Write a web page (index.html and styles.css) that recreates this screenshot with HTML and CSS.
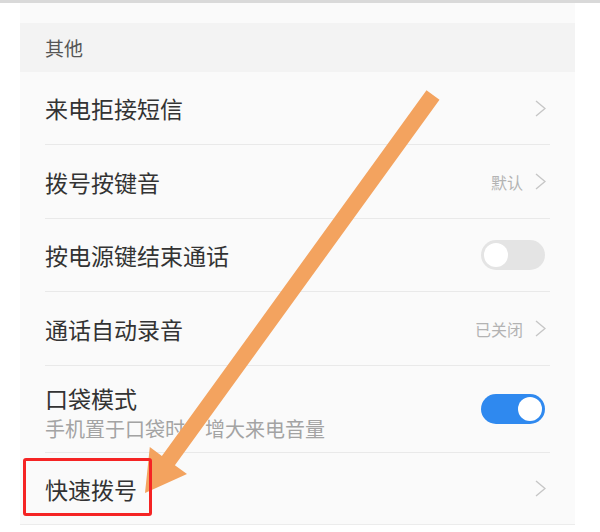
FILE: index.html
```html
<!DOCTYPE html>
<html lang="zh">
<head>
<meta charset="utf-8">
<link rel="stylesheet" href="styles.css">
</head>
<body>
<div class="topline"></div>
<div class="card">
  <div class="section-head">其他</div>
  <div class="row r1"><span class="title">来电拒接短信</span><span class="right"><svg class="chev" viewBox="0 0 11 17"><polyline points="1,1 10,8.5 1,16"/></svg></span></div>
  <div class="row r2"><span class="title">拨号按键音</span><span class="right"><span class="value">默认</span><svg class="chev" viewBox="0 0 11 17"><polyline points="1,1 10,8.5 1,16"/></svg></span></div>
  <div class="row r3"><span class="title">按电源键结束通话</span><span class="right"><span class="toggle off"><span class="knob"></span></span></span></div>
  <div class="row r4"><span class="title">通话自动录音</span><span class="right"><span class="value">已关闭</span><svg class="chev" viewBox="0 0 11 17"><polyline points="1,1 10,8.5 1,16"/></svg></span></div>
  <div class="row r5"><div class="texts"><span class="title t5">口袋模式</span><span class="sub">手机置于口袋时，增大来电音量</span></div><span class="right"><span class="toggle on"><span class="knob"></span></span></span></div>
  <div class="row r6"><span class="title">快速拨号</span><span class="right"><svg class="chev" viewBox="0 0 11 17"><polyline points="1,1 10,8.5 1,16"/></svg></span></div>
</div>
<svg class="arrow" viewBox="0 0 600 532" width="600" height="532"><polygon points="426.5,90.3 439.5,99.7 174.9,465.3 187,474 145,493 149.8,447 161.9,455.9"/></svg>
<div class="redbox"></div>
</body>
</html>
```
FILE: styles.css
```css
html, body {
  margin: 0;
  padding: 0;
  background: #ffffff;
  width: 600px;
  height: 532px;
  overflow: hidden;
  font-family: "Noto Sans CJK SC", "Noto Sans", sans-serif;
}
body { position: relative; }
.topline {
  height: 3px;
  background: #d9d9d9;
}
.card {
  margin: 0 25px 0 20px;
  padding-top: 20px;
  background: #fafafa;
  border-bottom: 1px solid #ececec;
}
.section-head {
  height: 49px;
  background: #f3f3f3;
  padding-left: 25px;
  display: flex;
  align-items: center;
  font-size: 19px;
  color: #555555;
}
.row {
  margin: 0 25px;
  display: flex;
  align-items: center;
  justify-content: space-between;
  border-bottom: 1px solid #e9e9e9;
  box-sizing: border-box;
}
.r1 { height: 73px; }
.r2 { height: 74px; }
.r3 { height: 73px; }
.r4 { height: 74px; }
.r5 { height: 87px; align-items: flex-start; }
.r6 { height: 71px; border-bottom: none; }
.title {
  font-size: 23px;
  color: #333333;
  line-height: 30px;
}
.texts {
  display: flex;
  flex-direction: column;
  padding-top: 18px;
}
.t5 {
  line-height: 28px;
}
.sub {
  font-size: 20px;
  line-height: 29px;
  margin-top: 2px;
  color: #a3a3a3;
}
.r5 .right { align-self: center; }
.right {
  display: flex;
  align-items: center;
  gap: 12px;
  padding-right: 4px;
}
.value {
  font-size: 16px;
  color: #b3b3b3;
}
.chev {
  width: 11px;
  height: 17px;
  fill: none;
  stroke: #c6c6c6;
  stroke-width: 1.4;
}
.toggle {
  width: 64px;
  height: 30px;
  border-radius: 15px;
  display: flex;
  align-items: center;
  padding: 0 3px;
  box-sizing: border-box;
  margin-right: 1px;
}
.toggle.off { background: #e4e4e4; justify-content: flex-start; }
.toggle.on { background: #2f89ef; justify-content: flex-end; }
.knob {
  width: 24px;
  height: 24px;
  border-radius: 50%;
  background: #ffffff;
}
.arrow {
  position: absolute;
  left: 0;
  top: 0;
}
.arrow polygon { fill: #f3a35f; }
.redbox {
  position: absolute;
  left: 23px;
  top: 458px;
  width: 129px;
  height: 58px;
  border: 3px solid #f52424;
  border-radius: 3px;
  box-sizing: border-box;
}
```
